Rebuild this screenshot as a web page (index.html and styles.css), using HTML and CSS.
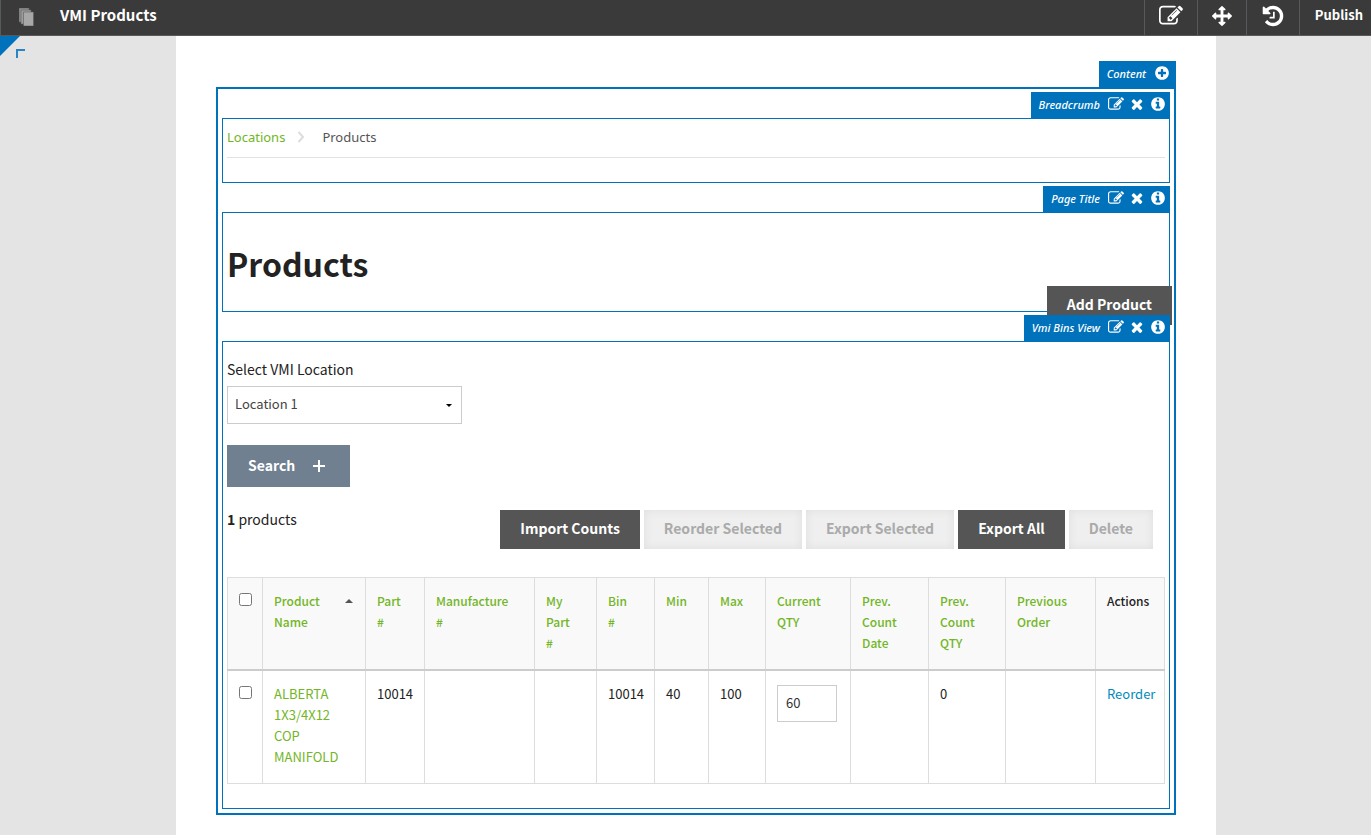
FILE: index.html
```html
<!DOCTYPE html>
<html lang="en">
<head>
    <meta charset="UTF-8">
    <meta name="viewport" content="width=device-width, initial-scale=1.0">
    <title>VMI Products</title>
    <link rel="stylesheet" href="styles.css">
</head>
<body>
    <svg class="sprite" aria-hidden="true">
        <symbol id="icon-edit" viewBox="0 0 1792 1792"><path d="M888 1184l116-116-152-152-116 116v56h96v96h56zm440-720q-16-16-33 1l-350 350q-17 17-1 33t33-1l350-350q17-17 1-33zm80 594v190q0 119-84.5 203.5t-203.5 84.5h-832q-119 0-203.5-84.5t-84.5-203.5v-832q0-119 84.5-203.5t203.5-84.5h832q63 0 117 25 15 7 18 23 3 17-9 29l-49 49q-14 14-32 8-23-6-45-6h-832q-66 0-113 47t-47 113v832q0 66 47 113t113 47h832q66 0 113-47t47-113v-126q0-13 9-22l64-64q15-15 35-7t20 29zm-96-738l288 288-672 672h-288v-288zm444 132l-92 92-288-288 92-92q28-28 68-28t68 28l152 152q28 28 28 68t-28 68z"/></symbol>
        <symbol id="icon-times" viewBox="0 0 1792 1792"><path d="M1490 1322q0 40-28 68l-136 136q-28 28-68 28t-68-28l-294-294-294 294q-28 28-68 28t-68-28l-136-136q-28-28-28-68t28-68l294-294-294-294q-28-28-28-68t28-68l136-136q28-28 68-28t68 28l294 294 294-294q28-28 68-28t68 28l136 136q28 28 28 68t-28 68l-294 294 294 294q28 28 28 68z"/></symbol>
        <symbol id="icon-info" viewBox="0 0 1792 1792"><path d="M1152 1376v-160q0-14-9-23t-23-9h-96v-512q0-14-9-23t-23-9h-320q-14 0-23 9t-9 23v160q0 14 9 23t23 9h96v320h-96q-14 0-23 9t-9 23v160q0 14 9 23t23 9h448q14 0 23-9t9-23zm-128-896v-160q0-14-9-23t-23-9h-192q-14 0-23 9t-9 23v160q0 14 9 23t23 9h192q14 0 23-9t9-23zm640 416q0 209-103 385.5t-279.5 279.5-385.5 103-385.5-103-279.5-279.5-103-385.5 103-385.5 279.5-279.5 385.5-103 385.5 103 279.5 279.5 103 385.5z"/></symbol>
        <symbol id="icon-plus" viewBox="0 0 1792 1792"><path d="M1344 960v-128q0-26-19-45t-45-19h-256v-256q0-26-19-45t-45-19h-128q-26 0-45 19t-19 45v256h-256q-26 0-45 19t-19 45v128q0 26 19 45t45 19h256v256q0 26 19 45t45 19h128q26 0 45-19t19-45v-256h256q26 0 45-19t19-45zm320-64q0 209-103 385.5t-279.5 279.5-385.5 103-385.5-103-279.5-279.5-103-385.5 103-385.5 279.5-279.5 385.5-103 385.5 103 279.5 279.5 103 385.5z"/></symbol>
        <symbol id="icon-move" viewBox="0 0 1792 1792"><path d="M1792 896q0 26-19 45l-256 256q-19 19-45 19t-45-19-19-45v-128h-384v384h128q26 0 45 19t19 45-19 45l-256 256q-19 19-45 19t-45-19l-256-256q-19-19-19-45t19-45 45-19h128v-384h-384v128q0 26-19 45t-45 19-45-19l-256-256q-19-19-19-45t19-45l256-256q19-19 45-19t45 19 19 45v128h384v-384h-128q-26 0-45-19t-19-45 19-45l256-256q19-19 45-19t45 19l256 256q19 19 19 45t-19 45-45 19h-128v384h384v-128q0-26 19-45t45-19 45 19l256 256q19 19 19 45z"/></symbol>
        <symbol id="icon-history" viewBox="0 0 1792 1792"><path d="M1664 896q0 156-61 298t-164 245-245 164-298 61q-172 0-327-72.5t-264-204.5q-7-10-6.5-22.5t8.5-20.5l137-138q10-9 25-9 16 2 23 12 73 95 179 147t225 52q104 0 198.5-40.5t163.5-109.5 109.5-163.5 40.5-198.5-40.5-198.5-109.5-163.5-163.5-109.5-198.5-40.5q-98 0-188 35.5t-160 101.5l137 138q31 30 14 69-17 40-59 40h-448q-26 0-45-19t-19-45v-448q0-42 40-59 39-17 69 14l130 129q107-101 244.5-156.5t284.5-55.5q156 0 298 61t245 164 164 245 61 298zm-640-288v448q0 14-9 23t-23 9h-320q-14 0-23-9t-9-23v-64q0-14 9-23t23-9h224v-352q0-14 9-23t23-9h64q14 0 23 9t9 23z"/></symbol>
    </svg>

    <header class="topbar">
        <svg class="pages-icon" viewBox="0 0 16 18" aria-hidden="true">
            <g stroke="#5a5a5a" stroke-width="0.6">
                <path fill="#939393" d="M0 0h10v14H0z"/>
                <path fill="#9d9d9d" d="M2 2h10v14H2z"/>
                <path fill="#a8a8a8" d="M4.500 4h10v14h-10z"/>
            </g>
        </svg>
        <span class="topbar-title">VMI Products</span>
        <nav class="topbar-actions">
            <button type="button" aria-label="Edit"><svg class="icon-lg"><use href="#icon-edit"/></svg></button>
            <button type="button" aria-label="Move"><svg class="icon-md"><use href="#icon-move"/></svg></button>
            <button type="button" aria-label="History"><svg class="icon-lg"><use href="#icon-history"/></svg></button>
            <button type="button" class="publish">Publish</button>
        </nav>
    </header>

    <main class="canvas">
        <svg class="corner" viewBox="0 0 26 23" aria-hidden="true">
            <path fill="#0072bc" d="M0 0h20L0 20z"/>
            <path fill="none" stroke="#2b84c4" stroke-width="2" d="M17 22v-8h8"/>
        </svg>
        <div class="page">
            <div class="tag">
                <span>Content</span>
                <button type="button" aria-label="Add widget"><svg class="icon"><use href="#icon-plus"/></svg></button>
            </div>
            <div class="zone">
                <section class="widget">
                    <div class="tag">
                        <span>Breadcrumb</span>
                        <button type="button" aria-label="Edit"><svg class="icon"><use href="#icon-edit"/></svg></button>
                        <button type="button" aria-label="Remove"><svg class="icon"><use href="#icon-times"/></svg></button>
                        <button type="button" aria-label="Info"><svg class="icon"><use href="#icon-info"/></svg></button>
                    </div>
                    <div class="widget-body">
                        <nav class="breadcrumb">
                            <a href="#">Locations</a>
                            <svg class="chevron" viewBox="0 0 8 12" aria-hidden="true"><path d="M1.500 1L6 6l-4.500 5"/></svg>
                            <span>Products</span>
                        </nav>
                    </div>
                </section>

                <section class="widget">
                    <div class="tag">
                        <span>Page Title</span>
                        <button type="button" aria-label="Edit"><svg class="icon"><use href="#icon-edit"/></svg></button>
                        <button type="button" aria-label="Remove"><svg class="icon"><use href="#icon-times"/></svg></button>
                        <button type="button" aria-label="Info"><svg class="icon"><use href="#icon-info"/></svg></button>
                    </div>
                    <div class="widget-body">
                        <h1>Products</h1>
                        <button type="button" class="btn add-product">Add Product</button>
                    </div>
                </section>

                <section class="widget">
                    <div class="tag">
                        <span>Vmi Bins View</span>
                        <button type="button" aria-label="Edit"><svg class="icon"><use href="#icon-edit"/></svg></button>
                        <button type="button" aria-label="Remove"><svg class="icon"><use href="#icon-times"/></svg></button>
                        <button type="button" aria-label="Info"><svg class="icon"><use href="#icon-info"/></svg></button>
                    </div>
                    <div class="widget-body bins">
                        <label for="location">Select VMI Location</label>
                        <select id="location">
                            <option>Location 1</option>
                        </select>
                        <button type="button" class="search">
                            Search
                            <svg class="search-plus" viewBox="0 0 12 12" aria-hidden="true"><path d="M6 0v12M0 6h12"/></svg>
                        </button>
                        <div class="toolbar">
                            <p><strong>1</strong> products</p>
                            <div class="toolbar-buttons">
                                <button type="button" class="btn">Import Counts</button>
                                <button type="button" class="btn" disabled>Reorder Selected</button>
                                <button type="button" class="btn" disabled>Export Selected</button>
                                <button type="button" class="btn">Export All</button>
                                <button type="button" class="btn" disabled>Delete</button>
                            </div>
                        </div>
                        <table>
                            <colgroup>
                                <col class="c-check">
                                <col class="c-name">
                                <col class="c-part">
                                <col class="c-manufacture">
                                <col class="c-mypart">
                                <col class="c-bin">
                                <col class="c-min">
                                <col class="c-max">
                                <col class="c-qty">
                                <col class="c-date">
                                <col class="c-prevqty">
                                <col class="c-order">
                                <col class="c-actions">
                            </colgroup>
                            <thead>
                                <tr>
                                    <th><input type="checkbox" aria-label="Select all"></th>
                                    <th><a href="#" class="sorted">Product Name</a></th>
                                    <th><a href="#">Part<br>#</a></th>
                                    <th><a href="#">Manufacture<br>#</a></th>
                                    <th><a href="#">My<br>Part<br>#</a></th>
                                    <th><a href="#">Bin<br>#</a></th>
                                    <th><a href="#">Min</a></th>
                                    <th><a href="#">Max</a></th>
                                    <th><a href="#">Current QTY</a></th>
                                    <th><a href="#">Prev. Count Date</a></th>
                                    <th><a href="#">Prev. Count QTY</a></th>
                                    <th><a href="#">Previous Order</a></th>
                                    <th>Actions</th>
                                </tr>
                            </thead>
                            <tbody>
                                <tr>
                                    <td><input type="checkbox" aria-label="Select product"></td>
                                    <td><a href="#">ALBERTA 1X3/4X12 COP MANIFOLD</a></td>
                                    <td>10014</td>
                                    <td></td>
                                    <td></td>
                                    <td>10014</td>
                                    <td>40</td>
                                    <td>100</td>
                                    <td><input type="text" class="qty" value="60" aria-label="Current QTY"></td>
                                    <td></td>
                                    <td>0</td>
                                    <td></td>
                                    <td><a href="#" class="reorder">Reorder</a></td>
                                </tr>
                            </tbody>
                        </table>
                    </div>
                </section>
            </div>
        </div>
    </main>
</body>
</html>
```
FILE: styles.css
```css
* {
    box-sizing: border-box;
}
body {
    margin: 0;
    min-height: 100vh;
    display: flex;
    flex-direction: column;
    background: #e4e4e4;
    color: #222;
    font-family: "Noto Sans CJK SC", "Noto Sans", sans-serif;
    font-size: 14px;
}
button, input, select {
    font-family: inherit;
}
button {
    border: none;
    padding: 0;
    cursor: pointer;
}
a {
    color: #72b626;
    text-decoration: none;
}
svg {
    display: block;
    fill: currentColor;
}
.sprite {
    display: none;
}
.icon {
    width: 16px;
    height: 16px;
}
.icon-md {
    width: 20px;
    height: 20px;
}
.icon-lg {
    width: 24px;
    height: 24px;
}

/* top bar */
.topbar {
    display: flex;
    align-items: center;
    height: 36px;
    background: #3a3a3a;
    border-left: 1px solid #58595b;
    border-bottom: 1px solid #58595b;
    color: #fff;
}
.pages-icon {
    width: 16px;
    height: 18px;
    margin-left: 18px;
    margin-bottom: 2px;
}
.topbar-title {
    margin-left: 25px;
    padding-bottom: 5px;
    font-size: 15px;
    line-height: 20px;
    font-weight: bold;
}
.topbar-actions {
    display: flex;
    align-self: stretch;
    margin-left: auto;
}
.topbar-actions button {
    display: flex;
    align-items: center;
    padding: 0 14px 4px;
    border-left: 1px solid #58595b;
    background: none;
    color: #fff;
}
.topbar-actions .publish {
    padding: 0 8px 6px 15px;
    font-size: 13px;
    font-weight: bold;
}

/* page canvas */
.canvas {
    position: relative;
    flex: 1;
    display: flex;
    justify-content: center;
    padding-left: 21px;
}
.corner {
    position: absolute;
    top: 0;
    left: 0;
    width: 26px;
    height: 23px;
}
.page {
    display: flex;
    flex-direction: column;
    width: 100%;
    max-width: 1040px;
    padding: 25px 40px 20px;
    background: #fff;
}
.zone {
    display: flex;
    flex-direction: column;
    gap: 3px;
    padding: 3px 4px 4px;
    border: 2px solid #0072bc;
}
.widget {
    display: flex;
    flex-direction: column;
}
.tag {
    position: relative;
    z-index: 1;
    display: flex;
    align-items: center;
    align-self: flex-end;
    gap: 5px;
    height: 26px;
    padding: 0 4px 2px 8px;
    background: #0072bc;
    color: #fff;
}
.page > .tag {
    padding-right: 6px;
}
.tag span {
    margin-right: 3px;
    padding-top: 2px;
    font: italic 500 11px/20px "Noto Sans", sans-serif;
}
.tag button {
    background: none;
    color: inherit;
}
.widget-body {
    position: relative;
    padding: 0 4px;
    border: 1px solid #0072bc;
}

/* widgets */
.breadcrumb {
    display: flex;
    align-items: center;
    height: 39px;
    margin-bottom: 24px;
    padding-bottom: 2px;
    border-bottom: 1px solid #e2e2e2;
    font-family: "Noto Sans", sans-serif;
    font-size: 13px;
    color: #555;
}
.chevron {
    width: 8px;
    height: 12px;
    margin: 0 17px 0 12px;
    fill: none;
    stroke: #ddd;
    stroke-width: 2;
}
h1 {
    margin: 0;
    padding: 26px 0 24px;
    font-size: 32px;
    line-height: 48px;
}
.btn {
    height: 39px;
    padding: 0 20px 3px;
    background: #555;
    color: #fff;
    font-size: 14px;
    font-weight: bold;
}
.btn:disabled {
    background: #efefef;
    box-shadow: inset 0 0 8px #ddd;
    color: #aaa;
    cursor: default;
}
.add-product {
    position: absolute;
    right: -3px;
    bottom: -14px;
}
.bins {
    display: flex;
    flex-direction: column;
    align-items: flex-start;
    padding: 15px 4px 24px;
}
.bins label {
    margin-bottom: 5px;
    font-size: 14px;
    line-height: 24px;
}
.bins select {
    width: 235px;
    height: 38px;
    margin-bottom: 21px;
    padding: 0 7px 3px;
    border: 1px solid #ccc;
    border-radius: 0;
    appearance: none;
    background: #fff url("data:image/svg+xml,%3Csvg xmlns='http://www.w3.org/2000/svg' width='6' height='3'%3E%3Cpath d='M0 0h6L3 3z'/%3E%3C/svg%3E") no-repeat right 9px center;
    color: #444;
    font-size: 13px;
}
.search {
    display: flex;
    align-items: center;
    height: 42px;
    margin-bottom: 22px;
    padding: 0 25px 3px 21px;
    background: #708090;
    color: #fff;
    font-size: 14px;
    font-weight: bold;
}
.search-plus {
    width: 12px;
    height: 12px;
    margin-top: 2px;
    margin-left: 18px;
    stroke: #fff;
    stroke-width: 2;
}
.toolbar {
    display: flex;
    justify-content: space-between;
    align-self: stretch;
    margin-bottom: 28px;
    padding-right: 12px;
}
.toolbar p {
    margin: 0;
    line-height: 20px;
}
.toolbar-buttons {
    display: flex;
    gap: 4px;
    padding-top: 1px;
}

/* bins table */
table {
    width: 100%;
    table-layout: fixed;
    border-collapse: collapse;
    font-size: 13px;
    line-height: 21px;
}
th, td {
    padding: 12px 11px 16px;
    border: 1px solid #ddd;
    text-align: left;
    vertical-align: top;
}
th {
    background: #f9f9f9;
    border-bottom: 2px solid #ccc;
    font-weight: 500;
    font-size: 12px;
}
th input, td input[type="checkbox"] {
    display: block;
    width: 13px;
    height: 13px;
    margin: 3px 0 0;
}
.sorted {
    display: block;
    padding-right: 20px;
    background: url("data:image/svg+xml,%3Csvg xmlns='http://www.w3.org/2000/svg' width='8' height='4'%3E%3Cpath fill='%23555' d='M0 4h8L4 0z'/%3E%3C/svg%3E") no-repeat right 1px top 9px;
}
.qty {
    display: block;
    width: 60px;
    height: 37px;
    margin-top: 2px;
    padding: 0 8px 2px;
    border: 1px solid #ccc;
    color: #333;
    font-size: 13px;
}
.reorder {
    color: #008cba;
}
.c-check { width: 35px; }
.c-name { width: 103px; }
.c-part { width: 59px; }
.c-manufacture { width: 110px; }
.c-mypart { width: 62px; }
.c-bin { width: 58px; }
.c-min { width: 54px; }
.c-max { width: 57px; }
.c-qty { width: 85px; }
.c-date { width: 78px; }
.c-prevqty { width: 77px; }
.c-order { width: 90px; }
.c-actions { width: 69px; }
```
